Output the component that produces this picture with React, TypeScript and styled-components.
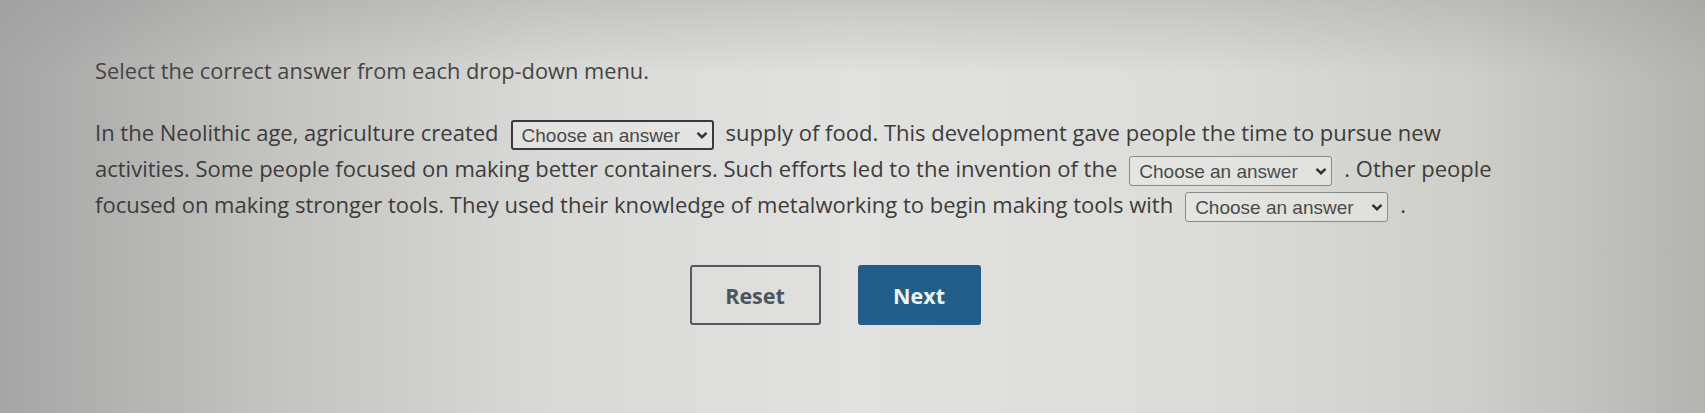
import styled, { createGlobalStyle } from "styled-components";

const GlobalStyle = createGlobalStyle`
  html, body {
    margin: 0;
    padding: 0;
  }
  body {
    width: 1705px;
    height: 413px;
    overflow: hidden;
    font-family: "Open Sans", "Noto Sans", sans-serif;
    background:
      linear-gradient(180deg, rgba(150, 150, 150, 0.35) 0%, rgba(150, 150, 150, 0) 18%),
      linear-gradient(90deg, #a6a6a6 0%, #c3c3bf 16%, #d9d9d7 32%, #e1e1df 50%, #dcdcd9 70%, #cfcfca 86%, #b3b3b1 100%);
  }
`;

const Page = styled.div`
  width: 1480px;
  padding: 56px 0 0 95px;
  box-sizing: content-box;
`;

const Prompt = styled.p`
  margin: 0;
  font-size: 21.8px;
  line-height: 30px;
  color: #454545;
`;

const Passage = styled.p`
  margin: 28px 0 0;
  max-width: 1420px;
  font-size: 22px;
  line-height: 36px;
  color: #3c3c3c;
`;

const DropDown = styled.span<{ $active?: boolean }>`
  display: inline-flex;
  align-items: center;
  justify-content: space-between;
  box-sizing: border-box;
  width: 203px;
  height: 30px;
  margin: 0 12px;
  padding: 0 4px 0 9px;
  vertical-align: middle;
  border: ${(p) => (p.$active ? "2px solid #3a3a3a" : "1px solid #8a8a8a")};
  border-radius: 3px;
  font-family: "Liberation Sans", Arial, sans-serif;
  font-size: 19px;
  line-height: 1;
  color: #4a4a4a;
  background: rgba(235, 235, 233, 0.5);
`;

const Chevron = () => (
  <svg width="12" height="10" viewBox="0 0 12 10" aria-hidden>
    <path d="M1.5 2.8 L6 7.2 L10.5 2.8" fill="none" stroke="#333" strokeWidth="2.4" />
  </svg>
);

const Choice = ({ active }: { active?: boolean }) => (
  <DropDown $active={active}>
    Choose an answer
    <Chevron />
  </DropDown>
);

const Actions = styled.div`
  display: flex;
  justify-content: center;
  gap: 37px;
  margin-top: 43px;
`;

const Button = styled.button<{ $primary?: boolean }>`
  box-sizing: border-box;
  width: ${(p) => (p.$primary ? "123px" : "131px")};
  height: 60px;
  border-radius: 3px;
  border: ${(p) => (p.$primary ? "none" : "2px solid #555a5e")};
  background: ${(p) => (p.$primary ? "#215e8a" : "transparent")};
  color: ${(p) => (p.$primary ? "#eef4f8" : "#4b555e")};
  font-family: "Open Sans", "Noto Sans", sans-serif;
  font-weight: 700;
  font-size: 21.5px;
  cursor: pointer;
`;

export default function App() {
  return (
    <>
      <GlobalStyle />
      <Page>
        <Prompt>Select the correct answer from each drop-down menu.</Prompt>
        <Passage>
          In the Neolithic age, agriculture created
          <Choice active />
          supply of food. This development gave people the time to pursue new activities. Some
          people focused on making better containers. Such efforts led to the invention of the
          <Choice />. Other people focused on making stronger tools. They used their knowledge of
          metalworking to begin making tools with
          <Choice />.
        </Passage>
        <Actions>
          <Button>Reset</Button>
          <Button $primary>Next</Button>
        </Actions>
      </Page>
    </>
  );
}
